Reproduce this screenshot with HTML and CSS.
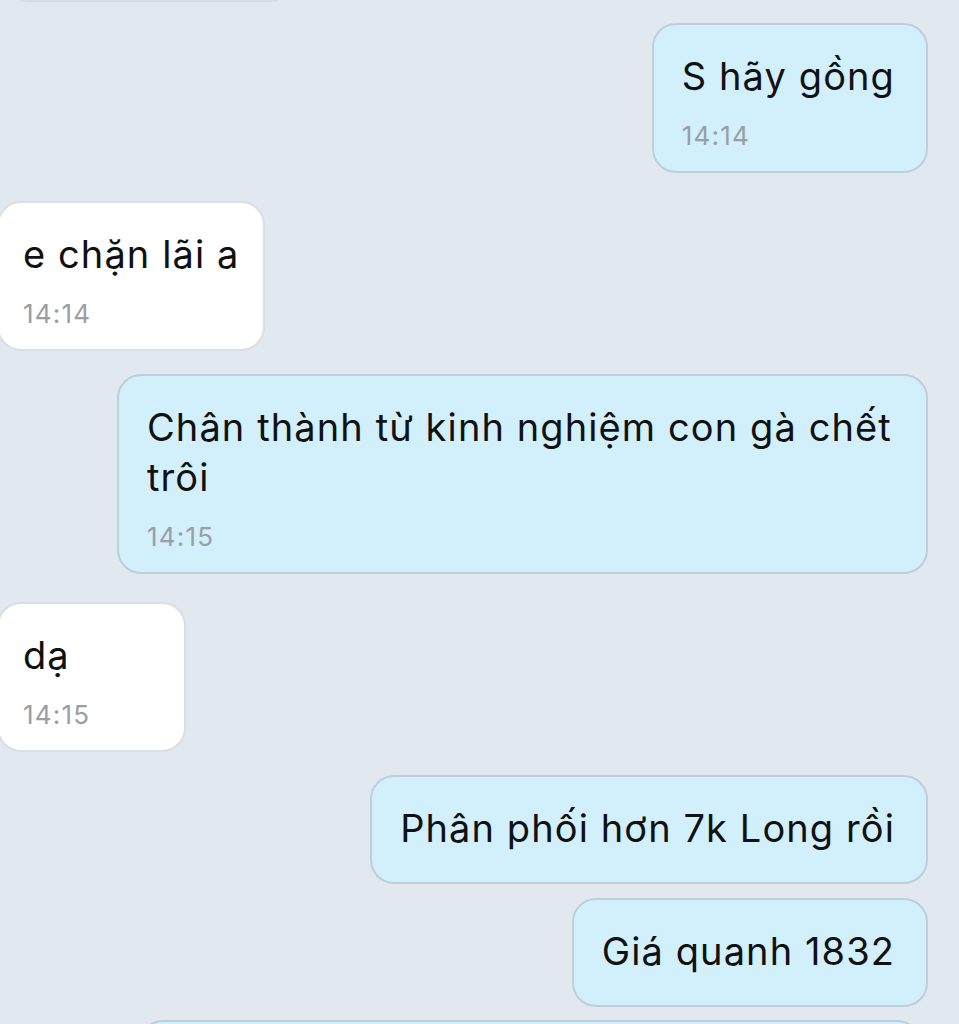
FILE: index.html
```html
<!DOCTYPE html>
<html lang="vi">
<head>
<meta charset="utf-8">
<link rel="stylesheet" href="styles.css">
</head>
<body>
<div class="chat">
  <div class="bubble in top-cut"></div>

  <div class="bubble out first">
    <div class="text">S hãy gồng</div>
    <div class="time">14:14</div>
  </div>

  <div class="bubble in gap-l">
    <div class="text">e chặn lãi a</div>
    <div class="time">14:14</div>
  </div>

  <div class="bubble out gap-m wide">
    <div class="text">Chân thành từ kinh nghiệm con gà chết<br>trôi</div>
    <div class="time">14:15</div>
  </div>

  <div class="bubble in gap-l">
    <div class="text">dạ</div>
    <div class="time">14:15</div>
  </div>

  <div class="bubble out gap-m only">
    <div class="text">Phân phối hơn 7k Long rồi</div>
  </div>

  <div class="bubble out gap-s only">
    <div class="text">Giá quanh 1832</div>
  </div>

  <div class="bubble out gap-s only next">
    <div class="text">&nbsp;</div>
  </div>
</div>
</body>
</html>
```

FILE: styles.css
```css
html, body {
  margin: 0;
  padding: 0;
  background: #e2e8f0;
  height: 100%;
  overflow: hidden;
}

.chat {
  display: flex;
  flex-direction: column;
  font-family: Inter, "Noto Sans", sans-serif;
  color: #111;
}

.bubble {
  box-sizing: border-box;
  border-radius: 24px;
  padding: 26px 31px 0 28px;
}

.bubble.out {
  align-self: flex-end;
  margin-right: 31px;
  background: #d2effc;
  border: 2px solid #bccfda;
}

.bubble.in {
  align-self: flex-start;
  margin-left: -3px;
  min-width: 189px;
  background: #ffffff;
  border: 2px solid #dadfe5;
  padding-left: 24px;
  padding-right: 24px;
}

.bubble.top-cut {
  width: 290px;
  height: 60px;
  margin-top: -59px;
  margin-left: 4px;
  padding: 0;
  box-shadow: 0 1px 1px rgba(0,0,0,0.08);
}

.bubble.first {
  margin-top: 22px;
}

.bubble.wide {
  width: 811px;
}

.gap-l { margin-top: 28px; }
.gap-m { margin-top: 23px; }
.gap-s { margin-top: 14px; }

.bubble.only {
  padding-bottom: 29px;
}

.bubble.next {
  width: 782px;
  margin-right: 38px;
  margin-top: 13px;
}

.text {
  font-size: 38px;
  line-height: 50px;
  letter-spacing: 1.1px;
  white-space: nowrap;
}

.time {
  font-size: 26px;
  line-height: 30px;
  letter-spacing: 1.2px;
  color: #9b9ea2;
  margin-top: 20px;
  margin-bottom: 20px;
}
```
